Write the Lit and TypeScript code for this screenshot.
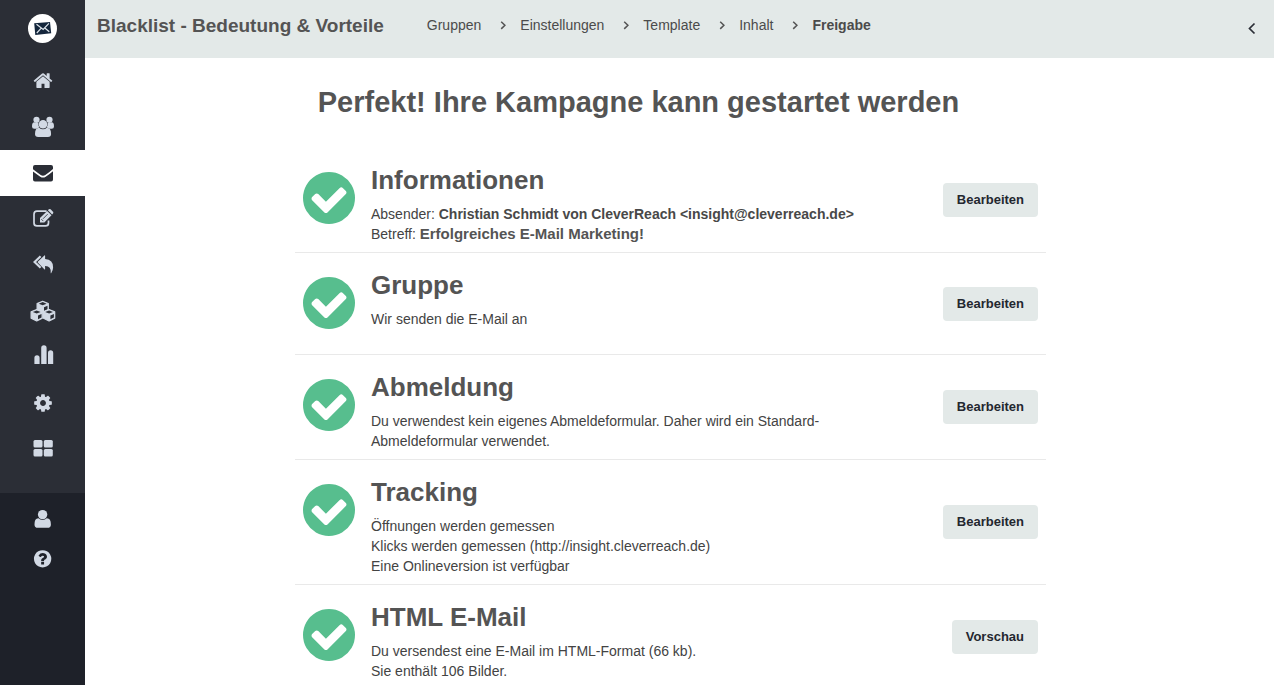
import { LitElement, html, css, svg } from "lit";
import { customElement, property } from "lit/decorators.js";

const cube = svg`
  <path stroke="currentColor" stroke-width="1.200" stroke-linejoin="round" d="M13 2.200l5.600 2.300v6.500L13 13.700l-5.600-2.700V4.500z"/>
  <path fill="var(--icon-gap)" d="M13 3.100l3.900 1.600L13 6.300 9.100 4.700zM14.300 8.200l3.500-1.500v3.600l-3.500 1.700z"/>`;

/* All sidebar glyphs share a 26x26 box. */
const icons: Record<string, unknown> = {
  home: svg`<path transform="translate(2.700 2.400) scale(.0115)" d="M1472 992v480q0 26-19 45t-45 19h-384v-384h-256v384h-384q-26 0-45-19t-19-45v-480q0-1 .5-3t.5-3l575-474 575 474q1 2 1 6zm223-69l-62 74q-8 9-21 11h-3q-13 0-21-7l-692-577-692 577q-12 8-24 7-13-2-21-11l-62-74q-8-10-7-23.5t11-21.5l719-599q32-26 76-26t76 26l244 204v-195q0-14 9-23t23-9h192q14 0 23 9t9 23v408l219 182q10 8 11 21.5t-7 23.5z"/>`,
  users: svg`
    <circle cx="6.500" cy="5.800" r="3.100"/><circle cx="19.500" cy="5.800" r="3.100"/>
    <path d="M4.400 8.300a4.200 4.200 0 0 0 4 .3 5.300 5.300 0 0 0 1 4.800q-1.700.1-2.700 1.300H4.300Q2 14.700 2 12.500 2 8.300 4.400 8.300zM21.600 8.300a4.200 4.200 0 0 1-4 .3 5.300 5.300 0 0 1-1 4.800q1.700.1 2.700 1.300h2.400q2.300 0 2.300-2.200 0-4.200-2.400-4.200z"/>
    <circle cx="13" cy="10.200" r="4.300"/>
    <path d="M9.200 13.700a5.300 5.300 0 0 0 7.600 0q4.300.1 4.300 6.200 0 3-3.200 3H8.200Q5 22.900 5 19.900q0-6.100 4.200-6.200z"/>`,
  mail: svg`
    <path d="M3 9.300V7q0-2 2-2h16q2 0 2 2v2q-3.500 3.200-7.700 5.900-2.300 1.500-4.600 0Q6 11.700 3 9.300z"/>
    <path d="M3 11.500q3.500 2.600 7.300 5.200 2.700 1.700 5.400 0 3.800-2.400 7.300-5.400V19.500q0 2-2 2H5q-2 0-2-2z"/>`,
  edit: svg`
    <g transform="translate(0 -1.200)">
    <path fill="none" stroke="currentColor" stroke-width="1.700" d="M16.600 6.400H7q-3 0-3 3v8.700q0 3 3 3h8.500q3 0 3-3v-2.300"/>
    <path d="M10 13.300l7.200-7.200 4.300 4.300-7.200 7.200H10z"/>
    <path d="M17.900 5.400l.9-.9q.9-.8 1.800 0l2.400 2.400q.8.900 0 1.800l-.9.900z"/>
    <path fill="none" stroke="var(--icon-gap)" stroke-width=".8" d="M13 14l4.700-4.700M11.300 14.300l2 2"/></g>`,
  reply: svg`
    <g transform="translate(0 -1)">
    <path fill="none" stroke="currentColor" stroke-width="2.200" d="M10.600 5.200L4.600 11l6 5.800"/>
    <path d="M14.400 4.500q.7-.6.700.5v3q8.300.7 8 8.500-.1 3-1.800 5.500-.7.800-.6-.3.500-6.900-5.600-6.700v2.900q0 1.100-.8.400L8 11.700q-.7-.7 0-1.300z"/></g>`,
  cubes: svg`
    <g transform="translate(-.300 1)">${cube}</g>
    <g transform="translate(-6.300 9.300)">${cube}</g>
    <g transform="translate(6.100 9.300)">${cube}</g>`,
  chart: svg`<path d="M4.400 20v-6.200q0-2.600 2.600-2.600t2.600 2.600V20zM11.200 20V4q0-2.700 2.700-2.700T16.600 4v16zM18 20V8.900q0-2.600 2.600-2.600t2.600 2.600V20z"/>`,
  cog: svg`<path transform="translate(2.700 2.700) scale(.0115)" d="M1152 896q0-106-75-181t-181-75-181 75-75 181 75 181 181 75 181-75 75-181zm512-109v222q0 12-8 23t-20 13l-185 28q-19 54-39 91 35 50 107 138 10 12 10 25t-9 23q-27 37-99 108t-94 71q-12 0-26-9l-138-108q-44 23-91 38-16 136-29 186-7 28-36 28h-222q-14 0-24.500-8.500t-11.500-21.500l-28-184q-49-16-90-37l-141 107q-10 9-25 9-14 0-25-11-126-114-165-168-7-10-7-23 0-12 8-23 15-21 51-66.500t54-70.500q-27-50-41-99l-183-27q-13-2-21-12.500t-8-23.500v-222q0-12 8-23t19-13l186-28q14-46 39-92-40-57-107-138-10-12-10-24 0-10 9-23 26-36 98.500-107.500t94.500-71.500q13 0 26 10l138 107q44-23 91-38 16-136 29-186 7-28 36-28h222q14 0 24.500 8.500t11.500 21.500l28 184q49 16 90 37l142-107q9-9 24-9 13 0 25 10 129 119 165 170 7 8 7 22 0 12-8 23-15 21-51 66.500t-54 70.500q26 50 41 98l183 28q13 2 21 12.500t8 23.500z"/>`,
  grid: svg`<rect x="3.500" y="4" width="9" height="7.500" rx="1.500"/><rect x="13.800" y="4" width="9" height="7.500" rx="1.500"/><rect x="3.500" y="12.900" width="9" height="7.500" rx="1.500"/><rect x="13.800" y="12.900" width="9" height="7.500" rx="1.500"/>`,
  user: svg`
    <circle cx="12.600" cy="8.600" r="4.700"/>
    <path d="M8.500 12.200a5.500 5.500 0 0 0 8.200 0q4.200-.2 4.200 6.200 0 3.400-3.400 3.400H7.900q-3.400 0-3.400-3.400 0-6.400 4-6.200z"/>`,
  help: svg`
    <g transform="translate(2.500 2.700) scale(.0113)"><path fill-rule="evenodd" d="M1024 1376v-192q0-14-9-23t-23-9h-192q-14 0-23 9t-9 23v192q0 14 9 23t23 9h192q14 0 23-9t9-23zm256-672q0-88-55.500-163t-138.500-116-170-41q-243 0-371 213-15 24 8 42l132 100q7 6 19 6 16 0 25-12 53-68 86-92 34-24 86-24 48 0 85.500 26t37.500 59q0 38-20 61t-68 45q-63 28-115.500 86.500t-52.500 125.500v36q0 14 9 23t23 9h192q14 0 23-9t9-23q0-19 21.500-49.500t54.500-49.500q32-18 49-28.500t46-35 44.500-48 28-60.500 12.500-81zm384 192q0 209-103 385.500t-279.500 279.500-385.500 103-385.500-103-279.500-279.500-103-385.500 103-385.500 279.500-279.500 385.500-103 385.500 103 279.500 279.500 103 385.500z"/></g>`,
};

@customElement("side-nav")
export class SideNav extends LitElement {
  static styles = css`
    :host {
      --icon-gap: #2b2e36;
      display: flex;
      flex-direction: column;
      background: #1e2129;
      color: #d2d9e4;
    }
    .logo {
      display: flex;
      justify-content: center;
      height: 58px;
      padding-top: 14px;
      box-sizing: border-box;
    }
    .logo svg {
      display: block;
    }
    .upper {
      background: #2b2e36;
      padding-bottom: 21px;
    }
    .lower {
      padding-top: 6px;
    }
    .item {
      display: flex;
      align-items: center;
      justify-content: center;
      height: 46px;
      color: inherit;
    }
    .lower .item {
      height: 40px;
    }
    .active {
      background: #ffffff;
      color: #2b2e36;
    }
    .item svg {
      display: block;
      fill: currentColor;
    }
  `;

  private item(icon: string, label: string, active = false) {
    return html`<a class="item ${active ? "active" : ""}" href="#${icon}" aria-label=${label}>
      <svg width="26" height="26" viewBox="0 0 26 26" aria-hidden="true">${icons[icon]}</svg>
    </a>`;
  }

  render() {
    return html`
      <nav class="upper">
        <a class="logo" href="#start" aria-label="CleverReach">
          <svg width="29" height="29" viewBox="0 0 29 29" aria-hidden="true">
            <circle cx="14.500" cy="14.500" r="14.500" fill="#fff" />
            <path fill="#14263c" d="M6.200 9.200L22 8l1.200 11.200L7.300 20.900z" />
            <path fill="none" stroke="#dfe6ec" stroke-width="1.200" d="M8.500 10.200l6.700 5.200 5.700-6M8.800 19l4.200-4.600M21.300 17.800l-4.200-3.600" />
          </svg>
        </a>
        ${this.item("home", "Start")} ${this.item("users", "Empfänger")}
        ${this.item("mail", "E-Mails", true)} ${this.item("edit", "Formulare")}
        ${this.item("reply", "Automation")} ${this.item("cubes", "Module")}
        ${this.item("chart", "Reports")} ${this.item("cog", "Einstellungen")}
        ${this.item("grid", "Apps")}
      </nav>
      <nav class="lower">${this.item("user", "Account")} ${this.item("help", "Hilfe")}</nav>
    `;
  }
}

@customElement("top-bar")
export class TopBar extends LitElement {
  static styles = css`
    :host {
      display: flex;
      align-items: flex-start;
      height: 58px;
      box-sizing: border-box;
      padding: 13px 16px 0 12px;
      background: #e3e9e8;
      color: #545454;
    }
    .title {
      margin: 0;
      font-size: 19px;
      line-height: 25px;
      font-weight: 700;
      white-space: nowrap;
    }
    .steps {
      display: flex;
      list-style: none;
      margin: 0 0 0 43px;
      padding: 0;
      font-size: 14px;
      line-height: 24px;
    }
    .step {
      display: flex;
      align-items: center;
    }
    .step svg {
      margin: 0 13px 0 19px;
    }
    .step a {
      color: #4b4b4b;
      text-decoration: none;
    }
    .step .current {
      font-weight: 700;
    }
    .collapse {
      display: flex;
      margin: 8px 0 0 auto;
      padding: 0;
      border: 0;
      background: none;
      color: #2b2e36;
    }
    svg {
      display: block;
      fill: none;
      stroke: currentColor;
    }
  `;

  private steps = ["Gruppen", "Einstellungen", "Template", "Inhalt", "Freigabe"];

  render() {
    const last = this.steps.length - 1;
    return html`
      <h1 class="title">Blacklist - Bedeutung &amp; Vorteile</h1>
      <ol class="steps">
        ${this.steps.map(
          (name, i) => html`<li class="step">
            ${i
              ? html`<svg width="7" height="10" viewBox="0 0 7 10" aria-hidden="true"><path stroke-width="1.500" d="M1.200 1.700L4.900 5.300 1.200 8.900" /></svg>`
              : ""}<a class=${i === last ? "current" : ""} href="#${name}">${name}</a>
          </li>`
        )}
      </ol>
      <button class="collapse" type="button" aria-label="Einklappen">
        <svg width="12" height="14" viewBox="0 0 12 14" aria-hidden="true"><path stroke-width="1.700" d="M8.500 2.500L3.500 7.500l5 5" /></svg>
      </button>
    `;
  }
}

@customElement("check-row")
export class CheckRow extends LitElement {
  static styles = css`
    :host {
      display: grid;
      grid-template-columns: 52px minmax(0, 490px) 1fr;
      column-gap: 16px;
      min-height: 102px;
      box-sizing: border-box;
      padding: 0 8px;
      border-bottom: 1px solid #e9e9e9;
    }
    .tick {
      display: block;
      margin-top: 24px;
    }
    .text {
      padding: 16px 0 8px;
      font-size: 14px;
      line-height: 20px;
    }
    .heading {
      margin: 0 0 8px;
      font-size: 26px;
      line-height: 32px;
      font-weight: 700;
      color: #545454;
    }
    .action {
      align-self: center;
      justify-self: end;
      height: 34px;
      padding: 0 14px;
      border: 0;
      border-radius: 4px;
      background: #e3e9e8;
      color: #23272f;
      font: 700 13px/34px "Liberation Sans", Arial, sans-serif;
    }
  `;

  @property() heading = "";
  @property() action = "Bearbeiten";

  render() {
    return html`
      <svg class="tick" width="52" height="52" viewBox="128 128 1536 1536" aria-hidden="true">
        <path fill="#57be8e" fill-rule="evenodd" d="M1412 734q0-28-18-46l-91-90q-19-19-45-19t-45 19l-408 407-226-226q-19-19-45-19t-45 19l-91 90q-18 18-18 46 0 27 18 45l362 362q19 19 45 19 27 0 46-19l543-543q18-18 18-45zm252 162q0 209-103 385.500t-279.500 279.500-385.500 103-385.500-103-279.500-279.500-103-385.500 103-385.500 279.500-279.500 385.500-103 385.500 103 279.500 279.500 103 385.500z" />
      </svg>
      <div class="text">
        <h3 class="heading">${this.heading}</h3>
        <slot></slot>
      </div>
      <button class="action" type="button">${this.action}</button>
    `;
  }
}

@customElement("app-root")
export class AppRoot extends LitElement {
  static styles = css`
    :host {
      display: grid;
      grid-template-columns: 85px minmax(0, 1fr);
      height: 100vh;
      overflow: hidden;
      background: #ffffff;
      color: #434343;
      font-family: "Liberation Sans", Arial, sans-serif;
    }
    .page {
      min-width: 0;
    }
    .content {
      padding-right: 18px;
    }
    .column {
      max-width: 751px;
      margin: 0 auto;
    }
    .lead {
      margin: 0;
      padding: 26px 64px 28px 0;
      font-size: 29px;
      line-height: 36px;
      font-weight: 700;
      text-align: center;
      color: #545454;
    }
    .line {
      display: block;
    }
    .strong {
      color: #484848;
    }
    .subject {
      font-size: 15px;
      color: #545454;
    }
  `;

  render() {
    return html`
      <side-nav></side-nav>
      <div class="page">
        <top-bar></top-bar>
        <main class="content">
          <div class="column">
            <h2 class="lead">Perfekt! Ihre Kampagne kann gestartet werden</h2>
            <check-row heading="Informationen">
              <span class="line">Absender: <b class="strong">Christian Schmidt von CleverReach &lt;insight@cleverreach.de&gt;</b></span>
              <span class="line">Betreff: <b class="subject">Erfolgreiches E-Mail Marketing!</b></span>
            </check-row>
            <check-row heading="Gruppe">
              <span class="line">Wir senden die E-Mail an</span>
            </check-row>
            <check-row heading="Abmeldung">
              <span class="line">Du verwendest kein eigenes Abmeldeformular. Daher wird ein Standard-Abmeldeformular verwendet.</span>
            </check-row>
            <check-row heading="Tracking">
              <span class="line">Öffnungen werden gemessen</span>
              <span class="line">Klicks werden gemessen (http://insight.cleverreach.de)</span>
              <span class="line">Eine Onlineversion ist verfügbar</span>
            </check-row>
            <check-row heading="HTML E-Mail" action="Vorschau">
              <span class="line">Du versendest eine E-Mail im HTML-Format (66 kb).</span>
              <span class="line">Sie enthält 106 Bilder.</span>
            </check-row>
          </div>
        </main>
      </div>
    `;
  }
}
